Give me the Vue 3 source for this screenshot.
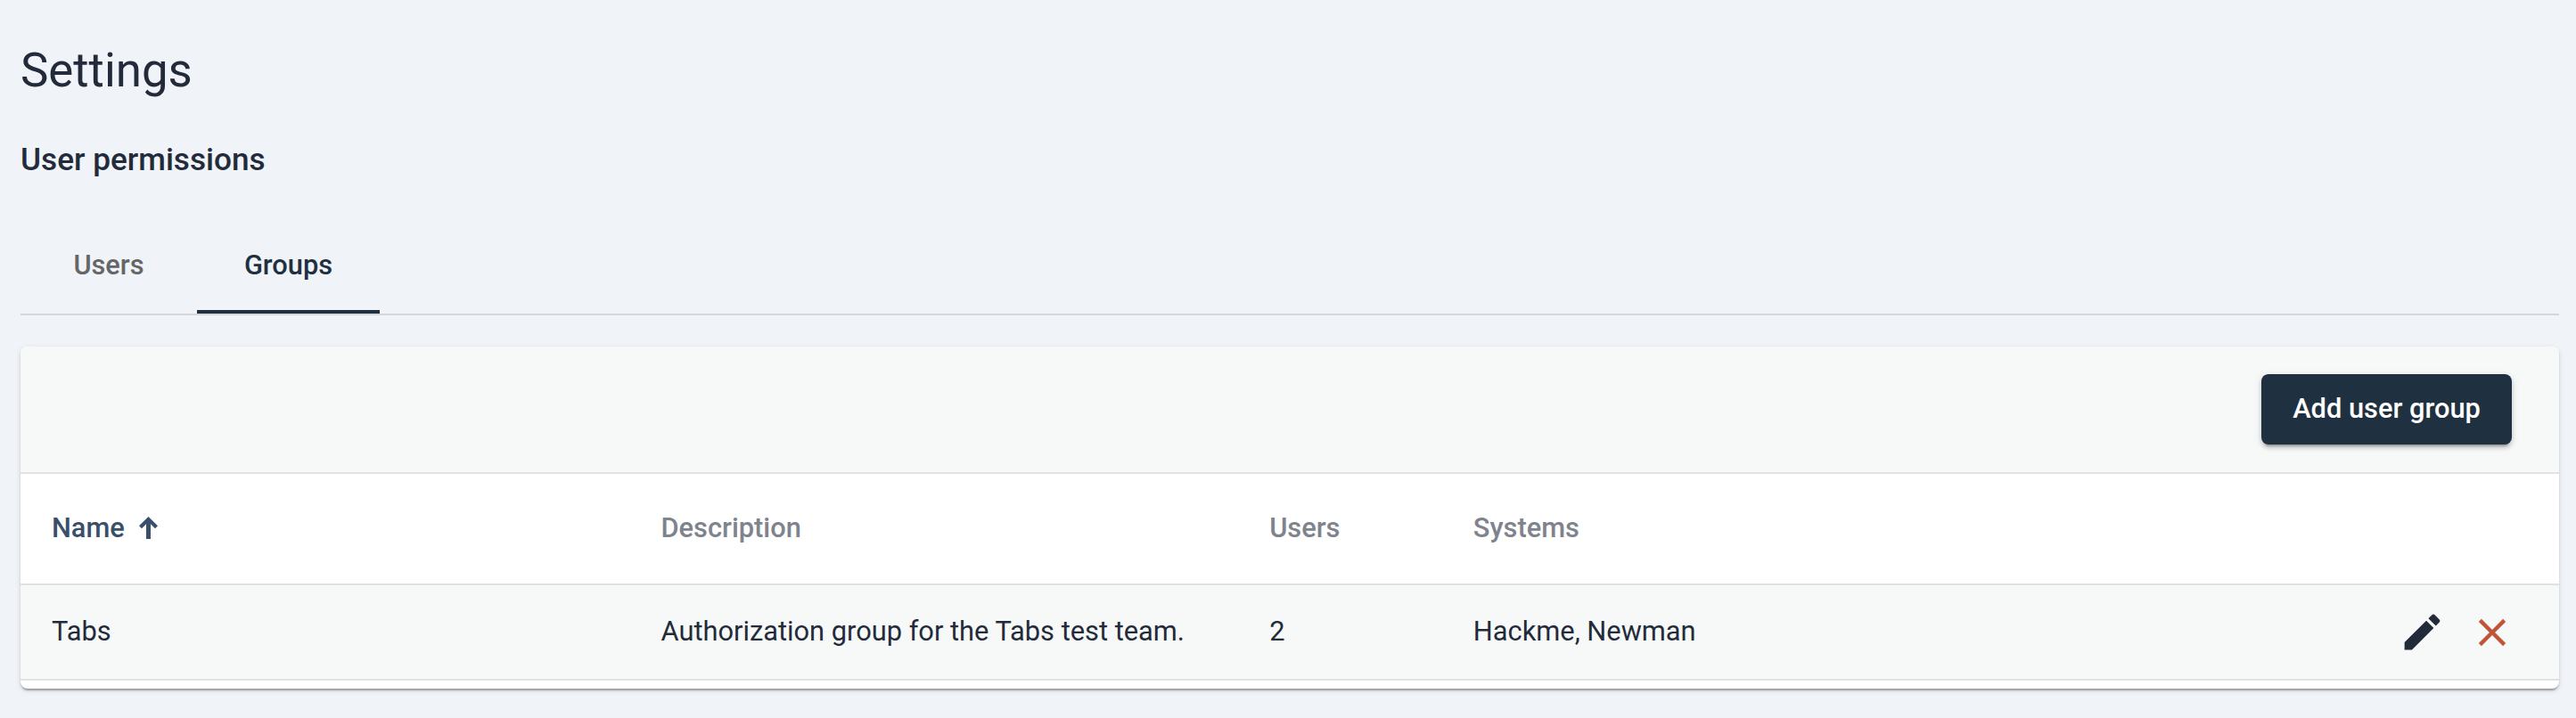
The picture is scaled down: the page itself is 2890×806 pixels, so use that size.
<script setup>
import { ref } from 'vue'

const tabs = ['Users', 'Groups']
const active = ref('Groups')
const groups = [
  { name: 'Tabs', description: 'Authorization group for the Tabs test team.', users: 2, systems: 'Hackme, Newman' },
]
</script>

<template>
  <main class="page">
    <h1>Settings</h1>
    <h2>User permissions</h2>
    <nav class="tabs">
      <button v-for="t in tabs" :key="t" class="tab" :class="{ active: t === active }" @click="active = t">{{ t }}</button>
    </nav>
    <section class="card">
      <div class="toolbar">
        <button class="add">Add user group</button>
      </div>
      <div class="row head">
        <span class="sorted">Name
          <svg class="arrow" viewBox="0 0 21 25"><path d="M10.5 0 21 10.2 18 13.2 13 8.3V25H8V8.3L3 13.2 0 10.2Z" /></svg>
        </span>
        <span>Description</span>
        <span>Users</span>
        <span>Systems</span>
        <span></span>
      </div>
      <div v-for="g in groups" :key="g.name" class="row body">
        <span class="text">{{ g.name }}</span>
        <span class="text">{{ g.description }}</span>
        <span class="text">{{ g.users }}</span>
        <span class="text">{{ g.systems }}</span>
        <span class="actions">
          <svg class="edit" viewBox="0 0 24 24"><path d="M3 17.25V21h3.75L17.81 9.94l-3.75-3.75L3 17.25zM20.71 7.04a1 1 0 0 0 0-1.41l-2.34-2.34a1 1 0 0 0-1.41 0l-1.83 1.83 3.75 3.75 1.83-1.83z" /></svg>
          <svg class="remove" viewBox="0 0 24 24"><path d="M19 6.41 17.59 5 12 10.59 6.41 5 5 6.41 10.59 12 5 17.59 6.41 19 12 13.41 17.59 19 19 17.59 13.41 12z" /></svg>
        </span>
      </div>
    </section>
  </main>
</template>

<style>
body {
  background: #f0f4f9;
}
</style>

<style scoped>
.page {
  box-sizing: border-box;
  height: 806px;
  padding: 47px 19px 0 23px;
  font-family: Roboto, sans-serif;
  font-size: 30.8px;
  color: #232b3b;
  background: #f0f4f9;
}
h1 {
  margin: 0;
  font-size: 52.8px;
  font-weight: 400;
  line-height: 64px;
}
h2 {
  margin: 45px 0 0;
  font-size: 35.2px;
  font-weight: 500;
  line-height: 46px;
}
.tabs {
  display: flex;
  height: 110px;
  margin-top: 40px;
  border-bottom: 2px solid #d3d6da;
}
.tab {
  height: 110px;
  padding: 4px 0 4px;
  width: 198px;
  border: 0;
  background: none;
  font: 500 30.8px Roboto, sans-serif;
  color: #666;
}
.tab.active {
  width: 205px;
  padding: 4px 0 0;
  border-bottom: 4px solid #1f3040;
  color: #1f3040;
}
.card {
  height: 384px;
  margin-top: 35px;
  border-radius: 8px;
  overflow: hidden;
  background: #fff;
  box-shadow: 0 4px 2px -2px rgba(0, 0, 0, 0.2), 0 2px 2px rgba(0, 0, 0, 0.14), 0 2px 6px rgba(0, 0, 0, 0.12);
}
.toolbar {
  box-sizing: border-box;
  display: flex;
  align-items: flex-start;
  justify-content: flex-end;
  height: 143px;
  padding: 31px 53px 0;
  background: #f7f9f8;
  border-bottom: 2px solid #e0e2e1;
}
.add {
  width: 281px;
  height: 79px;
  padding: 0 0 2px;
  border: 0;
  border-radius: 8px;
  background: #1f3040;
  color: #fff;
  font: 500 30.8px Roboto, sans-serif;
  white-space: nowrap;
  box-shadow: 0 6px 2px -4px rgba(0, 0, 0, 0.2), 0 4px 4px rgba(0, 0, 0, 0.14), 0 2px 10px rgba(0, 0, 0, 0.12);
}
.row {
  box-sizing: border-box;
  display: grid;
  grid-template-columns: 24% 23.97% 8.03% 24% 20%;
  align-items: center;
  border-bottom: 2px solid #e0e2e1;
}
.row > span {
  padding-left: 35px;
}
.head {
  height: 125px;
  padding-bottom: 3px;
  font-weight: 500;
  color: #7e838e;
}
.head .sorted {
  display: flex;
  align-items: center;
  gap: 16px;
  color: #3a4f6a;
}
.body {
  height: 107px;
  background: #f7f9f8;
}
.body .text {
  padding-bottom: 3px;
}
.arrow {
  width: 21px;
  height: 25px;
  fill: #3a4f6a;
}
.actions {
  display: flex;
  align-items: center;
  justify-content: flex-end;
  gap: 26px;
  padding-right: 49px;
}
.edit {
  width: 53px;
  height: 53px;
  fill: #232b3b;
}
.remove {
  width: 52px;
  height: 52px;
  fill: #bf5436;
}
</style>
